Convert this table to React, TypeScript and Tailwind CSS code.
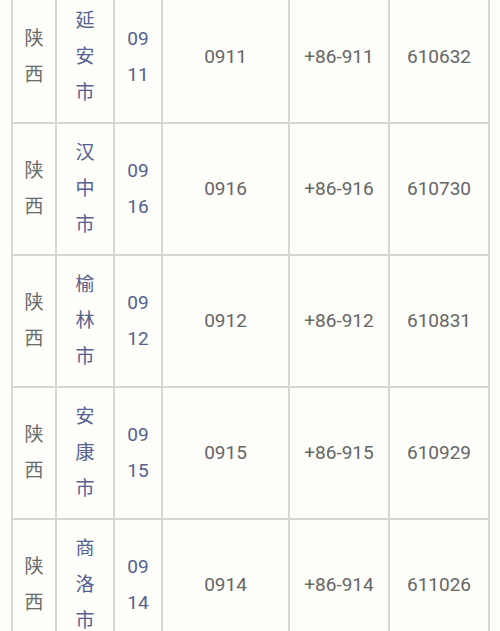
const rows = [
  { city: "延安市", code: ["09", "11"], area: "0911", intl: "+86-911", zip: "610632" },
  { city: "汉中市", code: ["09", "16"], area: "0916", intl: "+86-916", zip: "610730" },
  { city: "榆林市", code: ["09", "12"], area: "0912", intl: "+86-912", zip: "610831" },
  { city: "安康市", code: ["09", "15"], area: "0915", intl: "+86-915", zip: "610929" },
  { city: "商洛市", code: ["09", "14"], area: "0914", intl: "+86-914", zip: "611026" },
];

const cell = "border-2 border-[#d6d7d2] text-center align-middle p-0";

export default function App() {
  return (
    <div
      className="w-[500px] h-[631px] overflow-hidden bg-[#fdfdf9]"
      style={{ fontFamily: 'Roboto, "Noto Sans CJK SC", sans-serif' }}
    >
      <table className="table-fixed border-collapse ml-[11px] -mt-[10px] w-[479px]">
        <colgroup>
          <col className="w-[44px]" />
          <col className="w-[58px]" />
          <col className="w-[48px]" />
          <col className="w-[127px]" />
          <col className="w-[100px]" />
          <col className="w-[100px]" />
        </colgroup>
        <tbody>
          {rows.map((r) => (
            <tr key={r.zip} className="h-[132px]">
              <td className={`${cell} text-[19px] leading-[36px] text-[#6a6a6a]`}>
                <div>陕</div>
                <div>西</div>
              </td>
              <td className={`${cell} text-[19px] leading-[36px] text-[#556191]`}>
                {r.city.split("").map((c, i) => (
                  <div key={i}>{c}</div>
                ))}
              </td>
              <td className={`${cell} text-[19px] leading-[36px] text-[#556191]`}>
                <div>{r.code[0]}</div>
                <div>{r.code[1]}</div>
              </td>
              <td className={`${cell} text-[19px] text-[#666666]`}>{r.area}</td>
              <td className={`${cell} text-[19px] text-[#666666]`}>{r.intl}</td>
              <td className={`${cell} text-[19px] text-[#666666]`}>{r.zip}</td>
            </tr>
          ))}
        </tbody>
      </table>
    </div>
  );
}
